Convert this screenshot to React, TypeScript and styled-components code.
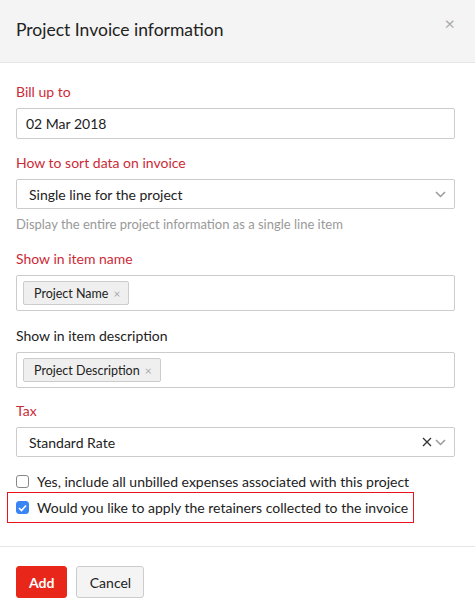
import styled, { createGlobalStyle } from "styled-components";

const Global = createGlobalStyle`
  body {
    margin: 0;
    background: #fff;
    font-family: Lato, "Liberation Sans", sans-serif;
    color: #222;
  }
  * { box-sizing: border-box; }
`;

const Modal = styled.div`
  width: 475px;
  height: 611px;
  display: flex;
  flex-direction: column;
  background: #fff;
`;

const Header = styled.div`
  height: 63px;
  flex: none;
  background: #f4f4f4;
  border-bottom: 1px solid #e6e6e6;
  display: flex;
  align-items: center;
  justify-content: space-between;
  padding: 0 20px 4px 16px;
`;

const Title = styled.h2`
  margin: 0;
  font-size: 17.5px;
  font-weight: 400;
  color: #222;
`;

const Close = styled.span`
  font-size: 18px;
  color: #aaa;
  line-height: 1;
  margin-top: -12px;
`;

const Body = styled.div`
  flex: 1;
  padding: 19px 20px 0 16px;
  display: flex;
  flex-direction: column;
`;

const Field = styled.div<{ $gap?: number }>`
  display: flex;
  flex-direction: column;
  margin-bottom: ${(p) => p.$gap ?? 16}px;
`;

const Label = styled.label<{ $required?: boolean }>`
  font-size: 14px;
  line-height: 20px;
  color: ${(p) => (p.$required ? "#cb2b37" : "#222")};
  margin-bottom: 6px;
`;

const Input = styled.div`
  height: 31px;
  border: 1px solid #ccc;
  border-radius: 2px;
  padding: 0 9px;
  display: flex;
  align-items: center;
  font-size: 14px;
  color: #222;
`;

const Select = styled(Input)`
  height: 30px;
  padding: 0 8px 0 12px;
  justify-content: space-between;
`;

const Icons = styled.span`
  display: flex;
  align-items: center;
  gap: 3px;
`;

const Help = styled.div`
  font-size: 13px;
  line-height: 18px;
  color: #999;
  margin-top: 6px;
`;

const TagBox = styled.div`
  height: 36px;
  border: 1px solid #ccc;
  border-radius: 2px;
  padding: 0 6px;
  display: flex;
  align-items: center;
`;

const Tag = styled.span`
  height: 24px;
  display: inline-flex;
  align-items: center;
  gap: 5px;
  padding: 0 8px 0 10px;
  background: #efefef;
  border: 1px solid #ccc;
  border-radius: 2px;
  font-size: 12.5px;
  color: #222;
`;

const TagX = styled.span`
  color: #aaa;
  font-size: 12px;
`;

const CheckRow = styled.label<{ $highlight?: boolean }>`
  display: flex;
  align-items: center;
  gap: 8px;
  font-size: 14px;
  color: #222;
  white-space: nowrap;
  height: ${(p) => (p.$highlight ? 31 : 22)}px;
  margin: ${(p) => (p.$highlight ? "0 0 0 -9px" : "0")};
  padding-left: ${(p) => (p.$highlight ? 8 : 0)}px;
  width: ${(p) => (p.$highlight ? "407px" : "auto")};
  border: ${(p) => (p.$highlight ? "1px solid #e8131b" : "none")};
`;

const Box = styled.span<{ $checked?: boolean }>`
  width: 13px;
  height: 13px;
  flex: none;
  border-radius: 3px;
  border: 1px solid ${(p) => (p.$checked ? "#3a85f5" : "#888")};
  background: ${(p) => (p.$checked ? "#3a85f5" : "#fff")};
  display: flex;
  align-items: center;
  justify-content: center;
`;

const Footer = styled.div`
  flex: none;
  height: 65px;
  border-top: 1px solid #e6e6e6;
  padding: 19px 16px 0;
  display: flex;
  gap: 9px;
  align-items: flex-start;
`;

const Button = styled.button<{ $primary?: boolean }>`
  height: 32px;
  padding: 0 12px;
  border-radius: 3px;
  font-family: inherit;
  font-size: 14px;
  font-weight: ${(p) => (p.$primary ? 700 : 400)};
  color: ${(p) => (p.$primary ? "#fff" : "#222")};
  background: ${(p) => (p.$primary ? "#e8271a" : "#f4f4f4")};
  border: 1px solid ${(p) => (p.$primary ? "#e8271a" : "#ccc")};
  min-width: ${(p) => (p.$primary ? 51 : 68)}px;
`;

const Chevron = () => (
  <svg width="11" height="7" viewBox="0 0 11 7">
    <path d="M1 1l4.5 4.5L10 1" fill="none" stroke="#999" strokeWidth="1.5" />
  </svg>
);

const Cross = () => (
  <svg width="10" height="10" viewBox="0 0 10 10">
    <path d="M1 1l8 8M9 1l-8 8" stroke="#333" strokeWidth="1.3" />
  </svg>
);

const Tick = () => (
  <svg width="9" height="8" viewBox="0 0 9 8">
    <path d="M1 4l2.5 2.5L8 1.5" fill="none" stroke="#fff" strokeWidth="1.6" />
  </svg>
);

export default function App() {
  return (
    <>
      <Global />
      <Modal>
        <Header>
          <Title>Project Invoice information</Title>
          <Close>×</Close>
        </Header>
        <Body>
          <Field $gap={14}>
            <Label $required>Bill up to</Label>
            <Input>02 Mar 2018</Input>
          </Field>
          <Field $gap={16}>
            <Label $required>How to sort data on invoice</Label>
            <Select>
              Single line for the project
              <Chevron />
            </Select>
            <Help>Display the entire project information as a single line item</Help>
          </Field>
          <Field $gap={15}>
            <Label $required>Show in item name</Label>
            <TagBox>
              <Tag>
                Project Name <TagX>×</TagX>
              </Tag>
            </TagBox>
          </Field>
          <Field $gap={13}>
            <Label>Show in item description</Label>
            <TagBox>
              <Tag>
                Project Description <TagX>×</TagX>
              </Tag>
            </TagBox>
          </Field>
          <Field $gap={13}>
            <Label $required>Tax</Label>
            <Select>
              Standard Rate
              <Icons>
                <Cross />
                <Chevron />
              </Icons>
            </Select>
          </Field>
          <CheckRow>
            <Box />
            Yes, include all unbilled expenses associated with this project
          </CheckRow>
          <CheckRow $highlight>
            <Box $checked>
              <Tick />
            </Box>
            Would you like to apply the retainers collected to the invoice
          </CheckRow>
        </Body>
        <Footer>
          <Button $primary>Add</Button>
          <Button>Cancel</Button>
        </Footer>
      </Modal>
    </>
  );
}
